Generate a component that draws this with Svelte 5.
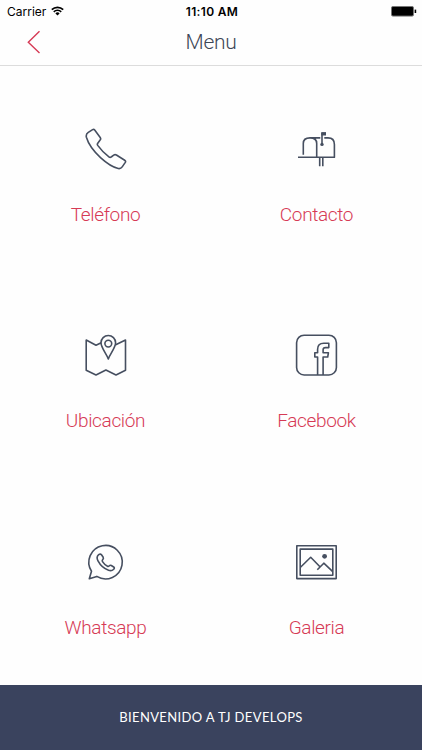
<script>
    const items = [
        { id: 'phone', label: 'Teléfono' },
        { id: 'mailbox', label: 'Contacto' },
        { id: 'map', label: 'Ubicación' },
        { id: 'facebook', label: 'Facebook' },
        { id: 'whatsapp', label: 'Whatsapp' },
        { id: 'gallery', label: 'Galeria' }
    ]
</script>

<div class="screen">
    <div class="status">
        <div class="carrier">
            <span>Carrier</span>
            <svg width="13" height="10" viewBox="0 0 13 10" fill="none" stroke="#000" stroke-width="1.7">
                <path d="M.8 3.7a8.1 8.1 0 0 1 11.4 0M2.8 5.8a5.2 5.2 0 0 1 7.4 0"/>
                <path d="M4.4 7.4a3 3 0 0 1 4.2 0L6.5 9.6z" fill="#000" stroke="none"/>
            </svg>
        </div>
        <span class="time">11:10 AM</span>
        <svg class="battery" width="26" height="11" viewBox="0 0 26 11">
            <rect x=".5" y=".5" width="22" height="9.6" rx="1.4" stroke="#777"/>
            <path d="M23.6 3.6h1.6v3.4h-1.6z"/>
        </svg>
    </div>

    <header>
        <button class="back" aria-label="Atrás">
            <svg width="14" height="24" viewBox="0 0 14 24" fill="none" stroke="#d63a55" stroke-width="1.4">
                <path d="M12.5 1.2L1.3 12.2L12.5 23"/>
            </svg>
        </button>
        <h1>Menu</h1>
    </header>

    <main>
        {#each items as item}
            <button class="item">
                <svg class="icon" width="43" height="44" viewBox="0 0 43 44">
                    {#if item.id === 'phone'}
                        <path d="M8.6 2.6Q9.8 1.9 10.7 3L16.2 10.4Q17.2 11.8 16.1 13.1L13.6 16.4Q13 17.3 13.7 18.4Q18.4 25 25.2 30.1Q26.2 30.8 27.2 30L29.7 28.1Q31 27.3 32.4 28L40.7 33.2Q42.1 34.1 41.3 35.4L38.2 39.9Q36.7 42 34.2 41.5Q26.7 40 16.5 30.7Q5.2 20 2.4 10.3Q1.6 7.2 4.3 5.4Z"/>
                    {:else if item.id === 'mailbox'}
                        <path d="M8.3 27.8V16.5Q8.3 10.9 15 10.9Q21.7 10.9 21.7 16.5V30M15 10.9H25.3M29.3 10.9H33Q39.4 10.9 39.4 17.5V30.3M3 30.3H40.1M27 17.2V5.7M24.7 30.5V39.3M27.8 30.5V39.3"/>
                        <circle class="solid" cx="27" cy="17.4" r="1.7"/>
                        <path class="solid" d="M26.3 5.1H31V8.5H26.3Z"/>
                    {:else if item.id === 'map'}
                        <path d="M17.2 9.8L12 12.2L2.2 7V37.3L12 42L21.9 37L32 42L41.5 37.3V7L31.2 12"/>
                        <path d="M24.3 26C22.8 21.2 17 14.8 17 9.8A7.3 7.3 0 0 1 31.6 9.8C31.6 14.8 25.8 21.2 24.3 26Z"/>
                        <circle cx="24.3" cy="10.6" r="3.4"/>
                    {:else if item.id === 'facebook'}
                        <rect x="1.6" y="2.2" width="39.8" height="39.8" rx="7.5"/>
                        <path d="M22.6 42V24H19.8V19.8H22.6V16.3Q22.6 10.3 28.8 10.3H33.8V14.6H30.5Q28.1 14.6 28.1 16.8V19.8H33.4L32.7 24H28.1V42"/>
                    {:else if item.id === 'whatsapp'}
                        <path d="M12.8 36.4L5.3 38.7L7.5 31.2A16.7 16.7 0 1 1 12.8 36.4Z"/>
                        <path d="M14.7 14.6Q16.4 13.4 17.5 14.8L19.2 17.3Q19.9 18.5 18.5 19.9Q17.9 20.7 18.5 21.6Q20.5 24.7 23.5 26.2Q24.3 26.7 25.1 26Q26.2 24.9 27.3 25.5L29.7 27Q31 27.9 29.7 29.2Q27.6 31.4 24.5 30.2Q17.7 27.9 14 20.9Q11.9 16.8 14.7 14.6Z"/>
                    {:else}
                        <rect x="1.8" y="5.8" width="39.4" height="32.8"/>
                        <rect x="5.2" y="9.1" width="32.6" height="26.2"/>
                        <path d="M5.5 27.2L15.7 17.3L25.2 27M22.3 29.8L28.8 23.2L37.5 31.4"/>
                        <circle class="solid" cx="29.6" cy="16.3" r="2.4"/>
                    {/if}
                </svg>
                <span>{item.label}</span>
            </button>
        {/each}
    </main>

    <footer>BIENVENIDO A TJ DEVELOPS</footer>
</div>

<style>
    :global(body) {
        background: #fefefe;
    }

    .screen {
        display: flex;
        flex-direction: column;
        height: 750px;
        font-family: Roboto, sans-serif;
    }

    button {
        padding: 0;
        border: none;
        background: none;
        font-family: inherit;
        cursor: pointer;
    }

    .status {
        display: grid;
        grid-template-columns: 1fr auto 1fr;
        align-items: center;
        height: 22px;
        padding: 0 5px 0 7px;
        font-family: Inter, sans-serif;
        font-size: 12px;
        color: #000;
    }

    .carrier {
        display: flex;
        align-items: center;
        gap: 5px;
    }

    .time {
        font-weight: 600;
        letter-spacing: 0.35px;
    }

    .battery {
        justify-self: end;
    }

    header {
        display: grid;
        grid-template-columns: 60px 1fr 60px;
        align-items: center;
        height: 43px;
        border-bottom: 1px solid #dcdcdc;
    }

    .back {
        display: flex;
        padding-left: 27px;
        margin-top: -3px;
    }

    h1 {
        margin: -4px 0 0;
        font-size: 21px;
        font-weight: 300;
        letter-spacing: -0.3px;
        text-align: center;
        color: #3e4757;
    }

    main {
        flex: 1;
        display: grid;
        grid-template-columns: 1fr 1fr;
        grid-template-rows: repeat(3, 1fr);
    }

    .item {
        display: flex;
        flex-direction: column;
        align-items: center;
        justify-content: center;
        gap: 32px;
        padding-top: 16px;
        font-size: 19px;
        font-weight: 300;
        line-height: 24px;
        letter-spacing: -0.35px;
        color: #d63a55;
    }

    .icon {
        fill: none;
        stroke: #464f60;
        stroke-width: 1.6;
        stroke-linejoin: round;
    }

    .solid {
        fill: #464f60;
        stroke: none;
    }

    footer {
        display: flex;
        align-items: center;
        justify-content: center;
        height: 65px;
        padding-bottom: 2px;
        box-sizing: border-box;
        background: #3a435e;
        font-family: Lato, sans-serif;
        font-size: 13px;
        letter-spacing: 0.37px;
        color: #fff;
    }
</style>
